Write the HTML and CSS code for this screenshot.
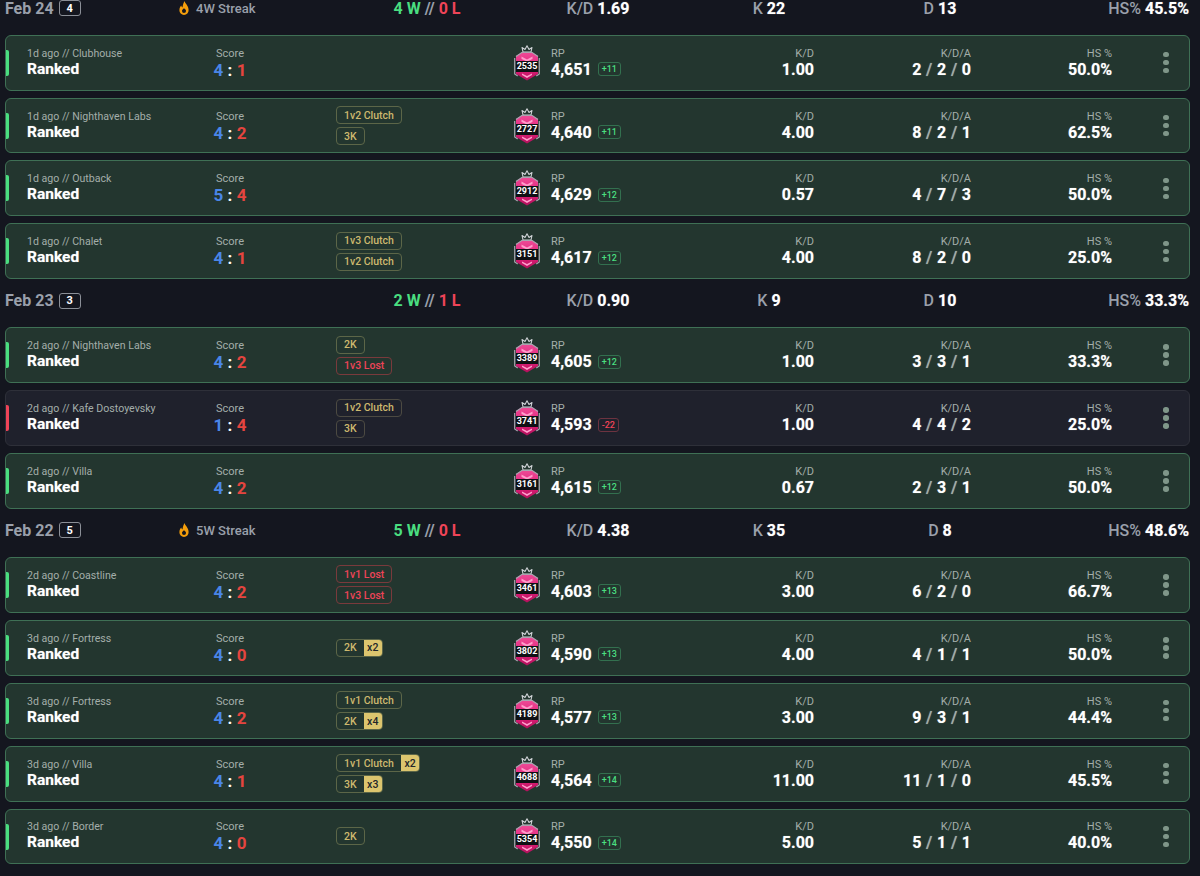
FILE: index.html
```html
<!DOCTYPE html>
<html lang="en">
<head>
<meta charset="utf-8">
<title>Match history</title>
<link rel="stylesheet" href="styles.css">
</head>
<body>
<svg class="defs" width="0" height="0" aria-hidden="true">
  <defs>
    <linearGradient id="pink" x1="0" y1="0" x2="0" y2="1">
      <stop offset="0" stop-color="#ee4a96"/>
      <stop offset=".6" stop-color="#e01f78"/>
      <stop offset="1" stop-color="#b0105a"/>
    </linearGradient>
    <symbol id="rank" viewBox="0 0 28 36">
      <path d="M10 7 9 2.500l3 2L14 .8l2 3.700 3-2L18 7z" fill="none" stroke="#cfd2d6" stroke-width="1.100" stroke-linejoin="round"/>
      <path d="M3 11 9 7.500h10l6 3.500v18L14 35.500 3 29z" fill="url(#pink)"/>
      <path d="M3 11.500 8.800 7.500h10.400L25 11.500M1.700 13v16l3 2M26.300 13v16l-3 2" fill="none" stroke="#a9a5b0" stroke-width="1.200"/>
      <path d="M8.500 11.500l5.500 3 5.500-3V14L14 16.500 8.500 14z" fill="#ff9ccb"/>
      <path d="M9 30l5 3 5-3v-1.500l-5 2.500-5-2.500z" fill="#ff9ccb"/>
    </symbol>
    <symbol id="flame" viewBox="0 0 12 16">
      <path d="M6.600 1C7 3.600 10.600 5.600 10.600 10A4.700 4.700 0 0 1 6 15 4.700 4.700 0 0 1 1.400 10.200C1.400 8 2.500 6.600 3.200 5.600c.3 1 .7 1.500 1.300 1.800C4.800 5.200 5.400 2.800 6.600 1zM6 8.200c-1.300 1-2 1.800-2 2.800a2 2 0 0 0 4 0c0-1-.8-1.900-2-2.800z" fill="#f59e0b" fill-rule="evenodd"/>
    </symbol>
  </defs>
</svg>

<main class="list">

<section class="group">
  <header class="day">
    <div class="date">Feb 24 <span class="count">4</span></div>
    <div class="streak"><svg class="flame"><use href="#flame"/></svg>4W Streak</div>
    <div class="wl"><span class="w">4 W</span> <span class="sl">//</span> <span class="l">0 L</span></div>
    <div class="sum">K/D <b>1.69</b></div>
    <div class="sum">K <b>22</b></div>
    <div class="sum">D <b>13</b></div>
    <div class="sum end">HS% <b>45.5%</b></div>
  </header>

  <article class="row win">
    <div class="title"><small>1d ago // Clubhouse</small><strong>Ranked</strong></div>
    <div class="score"><small>Score</small><div class="pts"><i>4</i> : <em>1</em></div></div>
    <div class="flags"></div>
    <div class="rank"><svg><use href="#rank"/></svg><span>2535</span></div>
    <div class="rp"><small>RP</small><div class="rpv"><strong>4,651</strong><span class="delta">+11</span></div></div>
    <div class="stat"><small>K/D</small><strong>1.00</strong></div>
    <div class="stat"><small>K/D/A</small><strong>2 <u>/</u> 2 <u>/</u> 0</strong></div>
    <div class="stat"><small>HS %</small><strong>50.0%</strong></div>
    <div class="menu"><span></span><span></span><span></span></div>
  </article>

  <article class="row win">
    <div class="title"><small>1d ago // Nighthaven Labs</small><strong>Ranked</strong></div>
    <div class="score"><small>Score</small><div class="pts"><i>4</i> : <em>2</em></div></div>
    <div class="flags"><div class="flag">1v2 Clutch</div><div class="flag">3K</div></div>
    <div class="rank"><svg><use href="#rank"/></svg><span>2727</span></div>
    <div class="rp"><small>RP</small><div class="rpv"><strong>4,640</strong><span class="delta">+11</span></div></div>
    <div class="stat"><small>K/D</small><strong>4.00</strong></div>
    <div class="stat"><small>K/D/A</small><strong>8 <u>/</u> 2 <u>/</u> 1</strong></div>
    <div class="stat"><small>HS %</small><strong>62.5%</strong></div>
    <div class="menu"><span></span><span></span><span></span></div>
  </article>

  <article class="row win">
    <div class="title"><small>1d ago // Outback</small><strong>Ranked</strong></div>
    <div class="score"><small>Score</small><div class="pts"><i>5</i> : <em>4</em></div></div>
    <div class="flags"></div>
    <div class="rank"><svg><use href="#rank"/></svg><span>2912</span></div>
    <div class="rp"><small>RP</small><div class="rpv"><strong>4,629</strong><span class="delta">+12</span></div></div>
    <div class="stat"><small>K/D</small><strong>0.57</strong></div>
    <div class="stat"><small>K/D/A</small><strong>4 <u>/</u> 7 <u>/</u> 3</strong></div>
    <div class="stat"><small>HS %</small><strong>50.0%</strong></div>
    <div class="menu"><span></span><span></span><span></span></div>
  </article>

  <article class="row win">
    <div class="title"><small>1d ago // Chalet</small><strong>Ranked</strong></div>
    <div class="score"><small>Score</small><div class="pts"><i>4</i> : <em>1</em></div></div>
    <div class="flags"><div class="flag">1v3 Clutch</div><div class="flag">1v2 Clutch</div></div>
    <div class="rank"><svg><use href="#rank"/></svg><span>3151</span></div>
    <div class="rp"><small>RP</small><div class="rpv"><strong>4,617</strong><span class="delta">+12</span></div></div>
    <div class="stat"><small>K/D</small><strong>4.00</strong></div>
    <div class="stat"><small>K/D/A</small><strong>8 <u>/</u> 2 <u>/</u> 0</strong></div>
    <div class="stat"><small>HS %</small><strong>25.0%</strong></div>
    <div class="menu"><span></span><span></span><span></span></div>
  </article>
</section>

<section class="group">
  <header class="day">
    <div class="date">Feb 23 <span class="count">3</span></div>
    <div class="streak"></div>
    <div class="wl"><span class="w">2 W</span> <span class="sl">//</span> <span class="l">1 L</span></div>
    <div class="sum">K/D <b>0.90</b></div>
    <div class="sum">K <b>9</b></div>
    <div class="sum">D <b>10</b></div>
    <div class="sum end">HS% <b>33.3%</b></div>
  </header>

  <article class="row win">
    <div class="title"><small>2d ago // Nighthaven Labs</small><strong>Ranked</strong></div>
    <div class="score"><small>Score</small><div class="pts"><i>4</i> : <em>2</em></div></div>
    <div class="flags"><div class="flag">2K</div><div class="flag lost">1v3 Lost</div></div>
    <div class="rank"><svg><use href="#rank"/></svg><span>3389</span></div>
    <div class="rp"><small>RP</small><div class="rpv"><strong>4,605</strong><span class="delta">+12</span></div></div>
    <div class="stat"><small>K/D</small><strong>1.00</strong></div>
    <div class="stat"><small>K/D/A</small><strong>3 <u>/</u> 3 <u>/</u> 1</strong></div>
    <div class="stat"><small>HS %</small><strong>33.3%</strong></div>
    <div class="menu"><span></span><span></span><span></span></div>
  </article>

  <article class="row loss">
    <div class="title"><small>2d ago // Kafe Dostoyevsky</small><strong>Ranked</strong></div>
    <div class="score"><small>Score</small><div class="pts"><i>1</i> : <em>4</em></div></div>
    <div class="flags"><div class="flag">1v2 Clutch</div><div class="flag">3K</div></div>
    <div class="rank"><svg><use href="#rank"/></svg><span>3741</span></div>
    <div class="rp"><small>RP</small><div class="rpv"><strong>4,593</strong><span class="delta neg">-22</span></div></div>
    <div class="stat"><small>K/D</small><strong>1.00</strong></div>
    <div class="stat"><small>K/D/A</small><strong>4 <u>/</u> 4 <u>/</u> 2</strong></div>
    <div class="stat"><small>HS %</small><strong>25.0%</strong></div>
    <div class="menu"><span></span><span></span><span></span></div>
  </article>

  <article class="row win">
    <div class="title"><small>2d ago // Villa</small><strong>Ranked</strong></div>
    <div class="score"><small>Score</small><div class="pts"><i>4</i> : <em>2</em></div></div>
    <div class="flags"></div>
    <div class="rank"><svg><use href="#rank"/></svg><span>3161</span></div>
    <div class="rp"><small>RP</small><div class="rpv"><strong>4,615</strong><span class="delta">+12</span></div></div>
    <div class="stat"><small>K/D</small><strong>0.67</strong></div>
    <div class="stat"><small>K/D/A</small><strong>2 <u>/</u> 3 <u>/</u> 1</strong></div>
    <div class="stat"><small>HS %</small><strong>50.0%</strong></div>
    <div class="menu"><span></span><span></span><span></span></div>
  </article>
</section>

<section class="group">
  <header class="day">
    <div class="date">Feb 22 <span class="count">5</span></div>
    <div class="streak"><svg class="flame"><use href="#flame"/></svg>5W Streak</div>
    <div class="wl"><span class="w">5 W</span> <span class="sl">//</span> <span class="l">0 L</span></div>
    <div class="sum">K/D <b>4.38</b></div>
    <div class="sum">K <b>35</b></div>
    <div class="sum">D <b>8</b></div>
    <div class="sum end">HS% <b>48.6%</b></div>
  </header>

  <article class="row win">
    <div class="title"><small>2d ago // Coastline</small><strong>Ranked</strong></div>
    <div class="score"><small>Score</small><div class="pts"><i>4</i> : <em>2</em></div></div>
    <div class="flags"><div class="flag lost">1v1 Lost</div><div class="flag lost">1v3 Lost</div></div>
    <div class="rank"><svg><use href="#rank"/></svg><span>3461</span></div>
    <div class="rp"><small>RP</small><div class="rpv"><strong>4,603</strong><span class="delta">+13</span></div></div>
    <div class="stat"><small>K/D</small><strong>3.00</strong></div>
    <div class="stat"><small>K/D/A</small><strong>6 <u>/</u> 2 <u>/</u> 0</strong></div>
    <div class="stat"><small>HS %</small><strong>66.7%</strong></div>
    <div class="menu"><span></span><span></span><span></span></div>
  </article>

  <article class="row win">
    <div class="title"><small>3d ago // Fortress</small><strong>Ranked</strong></div>
    <div class="score"><small>Score</small><div class="pts"><i>4</i> : <em>0</em></div></div>
    <div class="flags"><div class="flag">2K<span class="mult">x2</span></div></div>
    <div class="rank"><svg><use href="#rank"/></svg><span>3802</span></div>
    <div class="rp"><small>RP</small><div class="rpv"><strong>4,590</strong><span class="delta">+13</span></div></div>
    <div class="stat"><small>K/D</small><strong>4.00</strong></div>
    <div class="stat"><small>K/D/A</small><strong>4 <u>/</u> 1 <u>/</u> 1</strong></div>
    <div class="stat"><small>HS %</small><strong>50.0%</strong></div>
    <div class="menu"><span></span><span></span><span></span></div>
  </article>

  <article class="row win">
    <div class="title"><small>3d ago // Fortress</small><strong>Ranked</strong></div>
    <div class="score"><small>Score</small><div class="pts"><i>4</i> : <em>2</em></div></div>
    <div class="flags"><div class="flag">1v1 Clutch</div><div class="flag">2K<span class="mult">x4</span></div></div>
    <div class="rank"><svg><use href="#rank"/></svg><span>4189</span></div>
    <div class="rp"><small>RP</small><div class="rpv"><strong>4,577</strong><span class="delta">+13</span></div></div>
    <div class="stat"><small>K/D</small><strong>3.00</strong></div>
    <div class="stat"><small>K/D/A</small><strong>9 <u>/</u> 3 <u>/</u> 1</strong></div>
    <div class="stat"><small>HS %</small><strong>44.4%</strong></div>
    <div class="menu"><span></span><span></span><span></span></div>
  </article>

  <article class="row win">
    <div class="title"><small>3d ago // Villa</small><strong>Ranked</strong></div>
    <div class="score"><small>Score</small><div class="pts"><i>4</i> : <em>1</em></div></div>
    <div class="flags"><div class="flag">1v1 Clutch<span class="mult">x2</span></div><div class="flag">3K<span class="mult">x3</span></div></div>
    <div class="rank"><svg><use href="#rank"/></svg><span>4688</span></div>
    <div class="rp"><small>RP</small><div class="rpv"><strong>4,564</strong><span class="delta">+14</span></div></div>
    <div class="stat"><small>K/D</small><strong>11.00</strong></div>
    <div class="stat"><small>K/D/A</small><strong>11 <u>/</u> 1 <u>/</u> 0</strong></div>
    <div class="stat"><small>HS %</small><strong>45.5%</strong></div>
    <div class="menu"><span></span><span></span><span></span></div>
  </article>

  <article class="row win">
    <div class="title"><small>3d ago // Border</small><strong>Ranked</strong></div>
    <div class="score"><small>Score</small><div class="pts"><i>4</i> : <em>0</em></div></div>
    <div class="flags"><div class="flag">2K</div></div>
    <div class="rank"><svg><use href="#rank"/></svg><span>5354</span></div>
    <div class="rp"><small>RP</small><div class="rpv"><strong>4,550</strong><span class="delta">+14</span></div></div>
    <div class="stat"><small>K/D</small><strong>5.00</strong></div>
    <div class="stat"><small>K/D/A</small><strong>5 <u>/</u> 1 <u>/</u> 1</strong></div>
    <div class="stat"><small>HS %</small><strong>40.0%</strong></div>
    <div class="menu"><span></span><span></span><span></span></div>
  </article>
</section>

</main>
</body>
</html>
```

FILE: styles.css
```css
* { box-sizing: border-box; }

html, body {
  margin: 0;
  height: 876px;
  overflow: hidden;
  background: #14161f;
}

body {
  font-family: Roboto, "Liberation Sans", sans-serif;
  color: #fff;
}

.defs { position: absolute; }

.list {
  display: flex;
  flex-direction: column;
  gap: 11.5px;
  margin-top: -1.8px;
  padding: 0 10px 0 5px;
}

.group {
  display: flex;
  flex-direction: column;
  gap: 7px;
}

/* day header */
.day {
  display: grid;
  grid-template-columns: 173px 163.5px repeat(4, 171px) 1fr;
  align-items: center;
  height: 20px;
  margin-bottom: 9.500px;
  font-size: 16px;
  font-weight: 500;
  color: #9aa0ab;
  white-space: nowrap;
}

.date {
  display: flex;
  align-items: center;
  gap: 5px;
  font-size: 16px;
  font-weight: 700;
}

.count {
  display: flex;
  align-items: center;
  justify-content: center;
  width: 22px;
  height: 16px;
  border: 1px solid #8b8f97;
  border-radius: 3px;
  font-size: 11px;
  font-weight: 700;
  color: #fff;
}

.streak {
  display: flex;
  align-items: center;
  gap: 6px;
  font-size: 13px;
  font-weight: 500;
}

.flame { width: 12px; height: 16px; }

.wl { text-align: center; font-weight: 700; }
.w { color: #4ade80; }
.l { color: #ef4458; }
.sl { color: #9aa0ab; }

.sum { text-align: center; }
.sum.end { padding-right: 1px; text-align: right; }
.sum b { font-weight: 700; color: #fff; text-shadow: 0 0 1px rgba(255, 255, 255, .5); }

/* match row */
.row {
  position: relative;
  display: grid;
  grid-template-columns: 183px 126px 170px 45px 149px 114px 157px 141px 1fr;
  align-items: center;
  height: 55.9px;
  padding-left: 21px;
  border: 1px solid #3f7055;
  border-radius: 6px;
  background: #23362f;
}

.row::before {
  content: "";
  position: absolute;
  left: 0;
  top: 14px;
  width: 3px;
  height: 26px;
  border-radius: 0 2px 2px 0;
  background: #4ade80;
}

.row.loss {
  border-color: #2e3039;
  background: #1f212c;
}

.row.loss::before { background: #ef4458; }

small {
  display: block;
  font-size: 11px;
  line-height: 13px;
  color: #a3aeaa;
}

strong {
  display: block;
  font-size: 16px;
  line-height: 19px;
  font-weight: 700;
  color: #fff;
  text-shadow: 0 0 1px rgba(255, 255, 255, .5);
}

.title small { font-size: 10.6px; }
.title strong { font-size: 15.500px; }

.score {
  width: 40px;
  text-align: center;
}

.score small { line-height: 14px; }

.pts {
  font-size: 17px;
  line-height: 18px;
  font-weight: 700;
  color: #fff;
  white-space: nowrap;
}

.pts i { font-style: normal; color: #4a86e8; }
.pts em { font-style: normal; color: #e5453f; }

.flags {
  display: flex;
  flex-direction: column;
  align-items: flex-start;
  gap: 3px;
}

.flag {
  display: flex;
  align-items: center;
  height: 18px;
  padding: 0 7px;
  border: 1px solid #5c6648;
  border-radius: 4px;
  font-size: 10.500px;
  font-weight: 500;
  color: #cdb96e;
  overflow: hidden;
  white-space: nowrap;
}

.row.loss .flag { border-color: #4c4a42; }

.flag.lost {
  border-color: #7a3a3c;
  color: #ef4458;
}

.mult {
  display: flex;
  align-items: center;
  height: 18px;
  margin: 0 -7px 0 7px;
  padding: 0 3.500px;
  background: #dcc56e;
  color: #22262a;
}

.rank {
  position: relative;
  width: 28px;
  height: 36px;
  margin-left: 7px;
}

.rank svg {
  display: block;
  width: 28px;
  height: 36px;
}

.rank span {
  position: absolute;
  left: 3px;
  right: 3px;
  top: 16px;
  height: 11px;
  background: #101014;
  font-size: 9px;
  line-height: 11px;
  font-weight: 700;
  text-align: center;
  color: #fff;
}

.rpv {
  display: flex;
  align-items: center;
  gap: 6px;
}

.delta {
  display: block;
  height: 14px;
  padding: 0 3px;
  border: 1px solid #33704f;
  border-radius: 3px;
  font-size: 9px;
  line-height: 12px;
  font-weight: 500;
  color: #4ade80;
}

.delta.neg {
  border-color: #6d3340;
  color: #ef4458;
}

.stat { text-align: right; }
.stat strong { word-spacing: .7px; }

.stat u {
  text-decoration: none;
  font-weight: 500;
  color: #a3aeaa;
}

.menu {
  display: flex;
  flex-direction: column;
  gap: 2.500px;
  width: 6px;
  margin-left: 51px;
}

.menu span {
  width: 5.500px;
  height: 5.500px;
  border-radius: 50%;
  background: #7f9689;
}
```
